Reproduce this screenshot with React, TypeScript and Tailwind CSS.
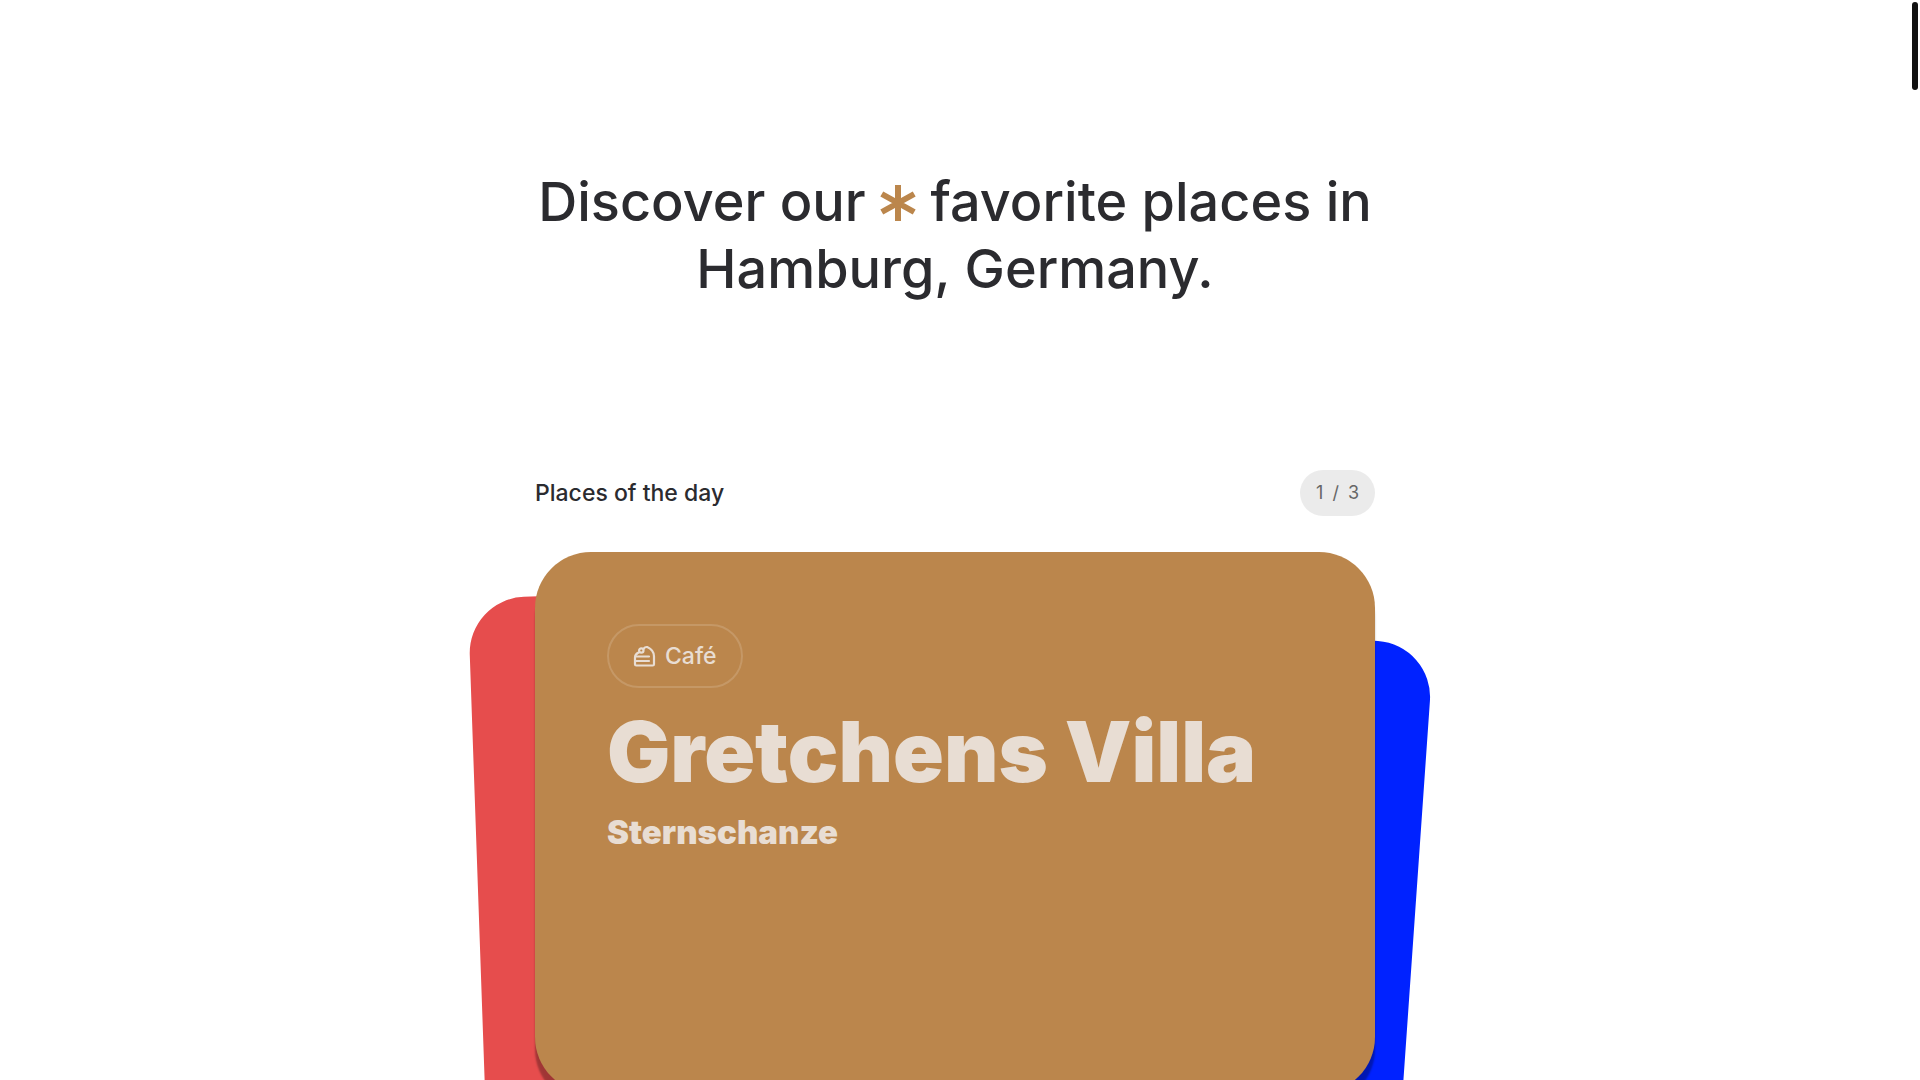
const place = {
  category: 'Café',
  name: 'Gretchens Villa',
  district: 'Sternschanze',
}

function Asterisk() {
  return (
    <svg viewBox="0 0 36 36" className="inline-block size-9 align-baseline" fill="none" stroke="#bb864c" strokeWidth="6" aria-hidden="true">
      <path d="M18 0v36M1.800 9l32.400 18M34.200 9L1.800 27" />
    </svg>
  )
}

function CakeIcon() {
  return (
    <svg
      viewBox="0 0 24 24"
      className="size-6"
      fill="none"
      stroke="currentColor"
      strokeWidth="2.2"
      strokeLinecap="round"
      strokeLinejoin="round"
      aria-hidden="true"
    >
      <path d="M5.6 8.6C3.4 9.6 2 11.4 2 13.6v6.600c0 .8.5 1.3 1.3 1.3h16.400c.8 0 1.3-.5 1.3-1.3v-7.700c0-4-3-7.700-6.800-9.400-1.400-.4-2.400.2-3.600 1.700" />
      <circle cx="8.300" cy="6.500" r="2.200" />
      <path d="M3 12.500h13M3 17h13" />
    </svg>
  )
}

export default function App() {
  return (
    <div className="relative h-screen overflow-hidden bg-white pr-[10px] font-['Inter',sans-serif] text-[#2b2b2f]">
      <main className="mx-auto max-w-[840px]">
        <h1 className="pt-[168px] text-center text-[54px] leading-[67px] font-medium">
          Discover our <Asterisk /> favorite places in Hamburg, Germany.
        </h1>

        <section className="mt-[168px]">
          <div className="flex items-center justify-between">
            <h2 className="text-[23px] leading-8 font-medium">Places of the day</h2>
            <span className="flex gap-[9px] rounded-full bg-[#ebebeb] px-4 py-[10px] text-lg leading-[26px] text-[#666666]">
              <span>1</span>
              <span>/</span>
              <span>3</span>
            </span>
          </div>

          <div className="relative mt-9">
            <div className="absolute inset-0 translate-x-[41px] translate-y-[63px] rotate-4 rounded-[56px] bg-[#0022ff]" />
            <div className="absolute inset-0 translate-x-[-58px] translate-y-[32px] -rotate-2 rounded-[56px] bg-[#e64d4d]" />
            <article className="relative min-h-[541px] rounded-[56px] bg-[#bb864c] p-[72px] text-[#e8ddd3] shadow-[0_12px_2px_rgba(0,0,0,0.3)]">
              <div className="flex w-fit items-center gap-2 rounded-full border-2 border-white/15 px-6 py-4 text-[23px] leading-7 font-medium">
                <CakeIcon />
                {place.category}
              </div>
              <h3 className="mt-5 text-[84px] leading-[88px] font-black whitespace-nowrap">{place.name}</h3>
              <p className="mt-4 text-[33px] leading-10 font-black">{place.district}</p>
            </article>
          </div>
        </section>
      </main>

      <div className="absolute top-[2px] right-[2px] h-[88px] w-[6px] rounded-full bg-[#111111]" />
    </div>
  )
}
